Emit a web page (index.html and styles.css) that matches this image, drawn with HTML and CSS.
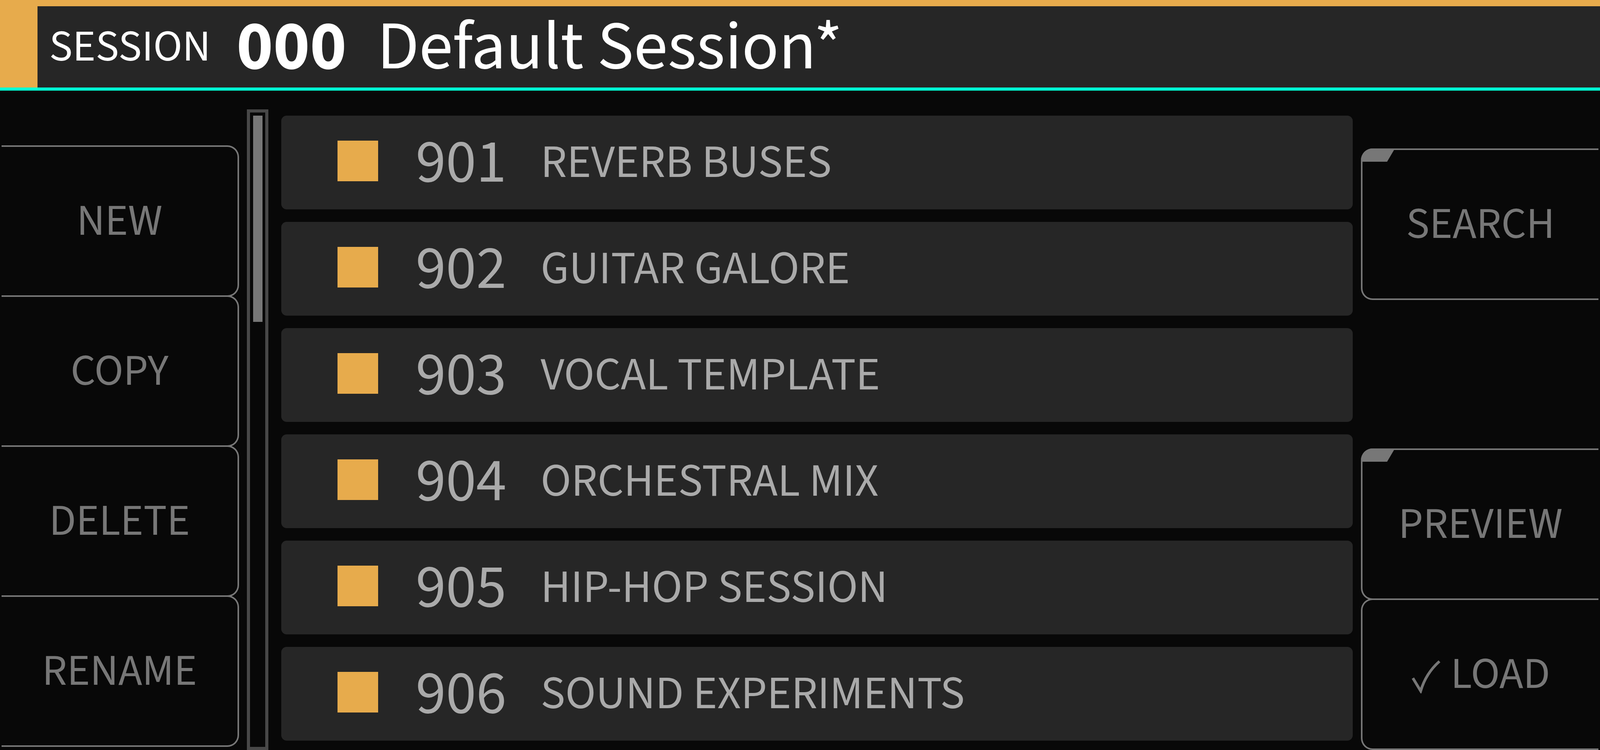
FILE: index.html
```html
<!DOCTYPE html>
<html lang="en">
<head>
<meta charset="utf-8">
<title>Session</title>
<link rel="stylesheet" href="styles.css">
</head>
<body>
<div class="app">
  <header class="header">
    <div class="header-inner">
      <span class="hdr-label">SESSION</span>
      <span class="hdr-num">000</span>
      <span class="hdr-title">Default Session*</span>
    </div>
  </header>
  <main class="main">
    <nav class="col-left">
      <button class="btn btn-l">NEW</button>
      <button class="btn btn-l">COPY</button>
      <button class="btn btn-l">DELETE</button>
      <button class="btn btn-l">RENAME</button>
    </nav>
    <div class="scrollbar"><div class="thumb"></div></div>
    <ul class="list">
      <li class="row"><span class="swatch"></span><span class="num">901</span><span class="name">REVERB BUSES</span></li>
      <li class="row"><span class="swatch"></span><span class="num">902</span><span class="name">GUITAR GALORE</span></li>
      <li class="row"><span class="swatch"></span><span class="num">903</span><span class="name">VOCAL TEMPLATE</span></li>
      <li class="row"><span class="swatch"></span><span class="num">904</span><span class="name">ORCHESTRAL MIX</span></li>
      <li class="row"><span class="swatch"></span><span class="num">905</span><span class="name">HIP-HOP SESSION</span></li>
      <li class="row"><span class="swatch"></span><span class="num">906</span><span class="name">SOUND EXPERIMENTS</span></li>
    </ul>
    <nav class="col-right">
      <button class="btn btn-r"><span class="tab"></span>SEARCH</button>
      <div class="slot-empty"></div>
      <button class="btn btn-r"><span class="tab"></span>PREVIEW</button>
      <button class="btn btn-r btn-load"><svg class="check" viewBox="0 0 80 86" aria-hidden="true"><path d="M5 47 L25 80 Q38 35 73 4" fill="none" stroke="#777" stroke-width="7"/></svg>LOAD</button>
    </nav>
  </main>
</div>
</body>
</html>
```
FILE: styles.css
```css
* { box-sizing: border-box; }
html, body { margin: 0; padding: 0; }
body {
  background: #080808;
  font-family: "Source Sans 3", "Source Sans Pro", "PT Sans", Lato, "Noto Sans", sans-serif;
  overflow: hidden;
}
.app { width: 100%; height: 1920px; display: flex; flex-direction: column; }

/* Header */
.header {
  height: 232px;
  flex: none;
  background: #e7ab4c;
  border-bottom: 8px solid #00ffd4;
  padding: 16px 0 0 96px;
  display: flex;
}
.header-inner {
  flex: 1;
  background: #262626;
  display: flex;
  align-items: center;
  padding-left: 30px;
  color: #fff;
  white-space: nowrap;
}
.hdr-label { font-size: 112px; }
.hdr-num { font-size: 178px; font-weight: 700; margin-left: 66px; }
.hdr-title { font-size: 175px; margin-left: 78px; }

/* Main */
.main {
  flex: 1;
  display: flex;
  align-items: flex-start;
  min-height: 0;
}
.col-left {
  width: 608px;
  flex: none;
  margin: 140px 0 0 4px;
  display: flex;
  flex-direction: column;
}
.btn {
  position: relative;
  height: 388px;
  flex: none;
  background: #080808;
  border: 4px solid #777;
  color: #777;
  font-family: inherit;
  font-size: 112px;
  display: flex;
  align-items: center;
  justify-content: center;
  padding: 0;
}
.btn + .btn { margin-top: -4px; }
.btn-l { border-left: none; border-radius: 0 30px 30px 0; }
.btn-r { border-right: none; border-radius: 30px 0 0 30px; }

.scrollbar {
  width: 55px;
  height: 1640px;
  margin: 48px 0 0 20px;
  border: 8px solid #484848;
  padding: 8px 7px 0 8px;
  flex: none;
}
.thumb { width: 24px; height: 528px; background: #777; }

.list {
  list-style: none;
  margin: 64px 0 0 33px;
  padding: 0;
  flex: 1;
  min-width: 0;
  display: flex;
  flex-direction: column;
  gap: 32px;
}
.row {
  height: 240px;
  background: #262626;
  border-radius: 14px;
  display: flex;
  align-items: center;
  padding-left: 144px;
  color: #aaa;
  white-space: nowrap;
  overflow: hidden;
}
.swatch { width: 104px; height: 104px; background: #e7ab4c; flex: none; margin-top: -8px; }
.num { font-size: 156px; margin-left: 96px; width: 234px; flex: none; }
.name { font-size: 118px; margin-left: 86px; }

.col-right {
  width: 608px;
  flex: none;
  margin: 148px 4px 0 21px;
  display: flex;
  flex-direction: column;
}
.slot-empty { height: 380px; flex: none; }
.tab {
  position: absolute;
  top: -4px;
  left: -4px;
  width: 87px;
  height: 34px;
  background: #777;
  border-top-left-radius: 30px;
  border-top-right-radius: 6px;
  clip-path: polygon(0 0, 100% 0, 77% 100%, 0 100%);
}
.check { width: 80px; height: 86px; margin-right: 22px; margin-top: 12px; flex: none; }
```
